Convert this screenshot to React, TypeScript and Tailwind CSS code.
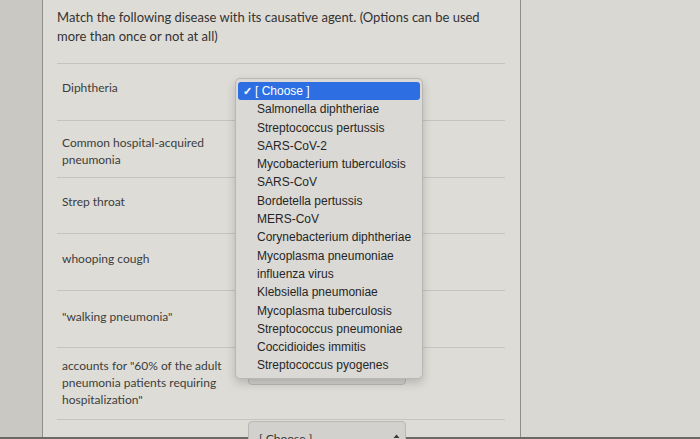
import React from 'react';

const rows = [
  { label: 'Diphtheria', h: 'h-[57px]', pt: 'pt-[15px]', open: true },
  { label: 'Common hospital-acquired pneumonia', h: 'h-[57px]', pt: 'pt-[13px]', open: false },
  { label: 'Strep throat', h: 'h-[56px]', pt: 'pt-[15px]', open: false },
  { label: 'whooping cough', h: 'h-[57px]', pt: 'pt-[16px]', open: false },
  { label: '"walking pneumonia"', h: 'h-[57px]', pt: 'pt-[17px]', open: false },
  { label: 'accounts for "60% of the adult pneumonia patients requiring hospitalization"', h: 'h-[72px]', pt: 'pt-[9px]', open: false },
];

const options = [
  'Salmonella diphtheriae',
  'Streptococcus pertussis',
  'SARS-CoV-2',
  'Mycobacterium tuberculosis',
  'SARS-CoV',
  'Bordetella pertussis',
  'MERS-CoV',
  'Corynebacterium diphtheriae',
  'Mycoplasma pneumoniae',
  'influenza virus',
  'Klebsiella pneumoniae',
  'Mycoplasma tuberculosis',
  'Streptococcus pneumoniae',
  'Coccidioides immitis',
  'Streptococcus pyogenes',
];

const UpDown = () => (
  <svg width="7" height="11" viewBox="0 0 7 11" className="shrink-0">
    <path d="M3.5 0.5 L6.5 4 L0.5 4 Z" fill="#3a3a3a" />
    <path d="M3.5 10.5 L6.5 7 L0.5 7 Z" fill="#3a3a3a" />
  </svg>
);

const Select: React.FC<{ className?: string }> = ({ className = '' }) => (
  <div
    className={`flex w-[158px] shrink-0 items-center justify-between rounded-[4px] border border-[#b9b8b4] bg-[#d2d1cd] pl-[10px] pr-[5px] text-[12px] text-[#333] ${className}`}
  >
    <span>[ Choose ]</span>
    <UpDown />
  </div>
);

// native popup list, drawn over the first row's select while it is open
const Menu = () => (
  <div className="absolute left-[192px] top-[78px] w-[188px] rounded-[5px] border border-[#b8b7b3] bg-[#dad9d5] py-[3px] font-['Liberation_Sans',Arial,sans-serif] text-[12px] text-[#262626] shadow-[0_4px_10px_rgba(0,0,0,0.18)]">
    <div className="mx-[2px] flex h-[18.3px] items-center rounded-[3px] bg-[#2d6fe3] pl-[5px] text-white">
      <span className="w-[10px] text-[11px] font-bold">✓</span>
      <span className="pl-[2px]">[ Choose ]</span>
    </div>
    {options.map((o) => (
      <div key={o} className="h-[18.3px] pl-[21px] leading-[18.3px]">
        {o}
      </div>
    ))}
  </div>
);

export default function App() {
  return (
    <div className="flex h-[439px] w-[700px] flex-col overflow-hidden bg-[#d9d8d3] font-['Lato','Noto_Sans',sans-serif]">
      <div className="flex min-h-0 flex-1">
        <div className="w-[42px] shrink-0 bg-[#c9c8c3]" />
        <div className="relative w-[479px] shrink-0 border-x border-[#8f8e8a] bg-[#dedcd7] pl-[14px] pr-[15px]">
          <p className="pt-[8px] text-[13px] leading-[19px] text-[#333]">
            Match the following disease with its causative agent. (Options can be used more than once or not at all)
          </p>
          <div className="mt-[17px] border-t border-[#c4c3bf]">
            {rows.map((r) => (
              <div key={r.label} className={`flex border-b border-[#c4c3bf] ${r.h}`}>
                <div className={`w-[191px] shrink-0 pl-[5px] pr-[12px] text-[12px] leading-[17px] text-[#3c3c3c] ${r.pt}`}>
                  {r.label}
                </div>
                <Select className={`mt-[6px] h-[31px] ${r.open ? 'invisible' : ''}`} />
              </div>
            ))}
            <div className="flex">
              <div className="w-[191px] shrink-0" />
              <Select className="mt-[1px] h-[36px]" />
            </div>
          </div>
          <Menu />
        </div>
        <div className="flex-1 bg-[#d9d8d3]" />
      </div>
      <div className="h-[2px] bg-[#6a6965]" />
    </div>
  );
}
